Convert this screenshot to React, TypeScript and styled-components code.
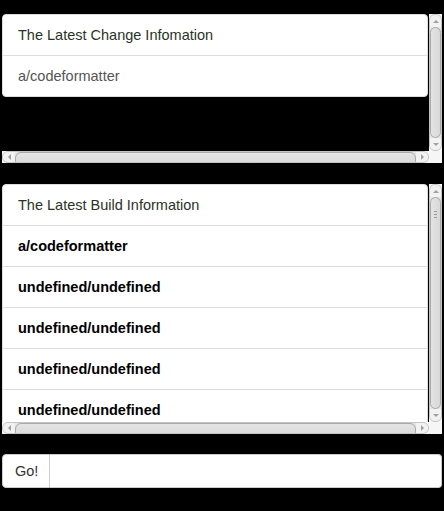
import React from "react";
import styled, { createGlobalStyle } from "styled-components";

const GlobalStyle = createGlobalStyle`
  html, body {
    margin: 0;
    padding: 0;
    background: #000;
  }
  body {
    font-family: "Liberation Sans", Arial, sans-serif;
    font-size: 14.5px;
    line-height: 20px;
    color: #333;
  }
  * {
    box-sizing: border-box;
  }
`;

const Page = styled.div`
  display: flex;
  flex-direction: column;
  gap: 21px;
  padding: 14px 2px 24px 2px;
`;

// scroll frame drawn by hand: viewport, vertical bar, horizontal bar, corner
const Frame = styled.div<{ $height: number }>`
  display: grid;
  grid-template-columns: 427px 13px;
  grid-template-rows: 1fr 12px;
  width: 440px;
  height: ${(p) => p.$height}px;
`;

const Viewport = styled.div`
  overflow: hidden;
`;

const Corner = styled.div`
  background: #f6f6f6;
`;

const VBar = styled.div`
  display: flex;
  background: #f6f6f6;
`;

const HBar = styled.div`
  display: flex;
  background: #f6f6f6;
`;

const Trough = styled.div<{ $vertical?: boolean }>`
  flex: 1;
  display: flex;
  flex-direction: ${(p) => (p.$vertical ? "column" : "row")};
  background: #e4e4e4;
  border: 1px solid #c4c4c4;
  border-radius: 6px;
  overflow: hidden;
`;

const Arrow = styled.div<{ $dir: "up" | "down" | "left" | "right" }>`
  flex: 0 0 12px;
  display: flex;
  align-items: center;
  justify-content: center;
  background: #f2f2f2;

  &::after {
    content: "";
    width: 0;
    height: 0;
    border: 3px solid transparent;
    ${(p) =>
      p.$dir === "up"
        ? "border-bottom-color: #a0a0a0; border-top-width: 0;"
        : p.$dir === "down"
        ? "border-top-color: #a0a0a0; border-bottom-width: 0;"
        : p.$dir === "left"
        ? "border-right-color: #a0a0a0; border-left-width: 0;"
        : "border-left-color: #a0a0a0; border-right-width: 0;"}
  }
`;

const Thumb = styled.div<{ $vertical?: boolean }>`
  flex: 1;
  display: flex;
  flex-direction: column;
  align-items: center;
  gap: 2px;
  padding-top: 13px;
  background: linear-gradient(${(p) => (p.$vertical ? "90deg" : "180deg")}, #e4e4e4, #d8d8d8);
  border: 1px solid #a9a9a9;
  border-radius: 6px;
`;

const Grip = styled.span`
  width: 3px;
  height: 1px;
  background: #9a9a9a;
`;

const Content = styled.div`
  width: 430px;
`;

const Card = styled.div`
  width: 426px;
  background: #fff;
  border: 1px solid #ddd;
  border-radius: 4px;
`;

const Row = styled.div<{ $bold?: boolean; $muted?: boolean }>`
  padding: 10px 15px;
  border-top: 1px solid #ddd;
  font-weight: ${(p) => (p.$bold ? "bold" : "normal")};
  color: ${(p) => (p.$bold ? "#000" : p.$muted ? "#555" : "#2a3328")};
  white-space: nowrap;

  &:first-child {
    border-top: 0;
  }
`;

const InputGroup = styled.div`
  display: flex;
  width: 440px;
  height: 34px;
  margin-top: -1px;
`;

const GoButton = styled.button`
  width: 48px;
  height: 34px;
  padding: 6px 12px;
  font-family: inherit;
  font-size: 14.5px;
  color: #333;
  background: #fff;
  border: 1px solid #ccc;
  border-radius: 4px 0 0 4px;
`;

const TextInput = styled.input`
  flex: 1;
  height: 34px;
  padding: 6px 12px;
  font-family: inherit;
  font-size: 14px;
  border: 1px solid #ccc;
  border-left: 0;
  border-radius: 0 4px 4px 0;
  outline: none;
`;

const ScrollPanel = ({ height, grip, children }: { height: number; grip?: boolean; children: React.ReactNode }) => (
  <Frame $height={height}>
    <Viewport>{children}</Viewport>
    <VBar>
      <Trough $vertical>
        <Arrow $dir="up" />
        <Thumb $vertical>
          {grip && (
            <>
              <Grip />
              <Grip />
              <Grip />
            </>
          )}
        </Thumb>
        <Arrow $dir="down" />
      </Trough>
    </VBar>
    <HBar>
      <Trough>
        <Arrow $dir="left" />
        <Thumb />
        <Arrow $dir="right" />
      </Trough>
    </HBar>
    <Corner />
  </Frame>
);

const builds = ["a/codeformatter", "undefined/undefined", "undefined/undefined", "undefined/undefined", "undefined/undefined"];

export default function App() {
  return (
    <>
      <GlobalStyle />
      <Page>
        <ScrollPanel height={149}>
          <Content>
            <Card>
              <Row>The Latest Change Infomation</Row>
              <Row $muted>a/codeformatter</Row>
            </Card>
          </Content>
        </ScrollPanel>
        <ScrollPanel height={250} grip>
          <Content>
            <Card>
              <Row>The Latest Build Information</Row>
              {builds.map((b, i) => (
                <Row $bold key={i}>
                  {b}
                </Row>
              ))}
            </Card>
          </Content>
        </ScrollPanel>
        <InputGroup>
          <GoButton>Go!</GoButton>
          <TextInput type="text" />
        </InputGroup>
      </Page>
    </>
  );
}
